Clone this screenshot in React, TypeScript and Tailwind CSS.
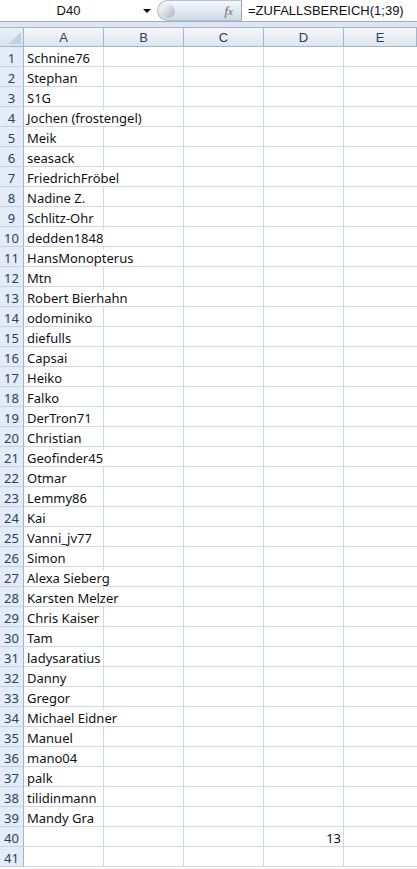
import React from 'react';

const names = [
  'Schnine76', 'Stephan', 'S1G', 'Jochen (frostengel)', 'Meik', 'seasack', 'FriedrichFröbel',
  'Nadine Z.', 'Schlitz-Ohr', 'dedden1848', 'HansMonopterus', 'Mtn', 'Robert Bierhahn',
  'odominiko', 'diefulls', 'Capsai', 'Heiko', 'Falko', 'DerTron71', 'Christian', 'Geofinder45',
  'Otmar', 'Lemmy86', 'Kai', 'Vanni_jv77', 'Simon', 'Alexa Sieberg', 'Karsten Melzer',
  'Chris Kaiser', 'Tam', 'ladysaratius', 'Danny', 'Gregor', 'Michael Eidner', 'Manuel',
  'mano04', 'palk', 'tilidinmann', 'Mandy Gra',
];

const cols = ['A', 'B', 'C', 'D', 'E'];

function FormulaBar() {
  return (
    <div className="flex h-[22px] border-b border-[#a3aebd] bg-white">
      <div className="relative flex w-[157px] items-center justify-center text-[13px] text-[#111]">
        <span className="-ml-[20px]">D40</span>
        <span className="absolute right-[6px] top-[9px] h-0 w-0 border-x-[4px] border-t-[4px] border-x-transparent border-t-[#111]" />
      </div>
      <div className="relative flex w-[85px] items-center justify-end rounded-l-full border border-r-[#9aa8b8] border-[#b4c1d1] bg-gradient-to-b from-[#f4f7fb] via-[#e3e9f2] to-[#cfd9e6] pr-[8px]">
        <span className="absolute left-[3px] top-[3px] h-[14px] w-[14px] rounded-full bg-gradient-to-br from-white to-[#a9b3bf]" />
        <span className="font-['Liberation_Serif'] text-[13px] italic text-[#666]">f<span className="text-[11px]">x</span></span>
      </div>
      <div className="flex flex-1 items-center pl-[6px] text-[13px] text-[#111]">=ZUFALLSBEREICH(1;39)</div>
    </div>
  );
}

export default function App() {
  const rows = Array.from({ length: 41 }, (_, i) => i + 1);
  return (
    <div className="h-[869px] w-[417px] overflow-hidden bg-white font-['Liberation_Sans',sans-serif]">
      <FormulaBar />
      <div className="h-[6px] border-b border-[#9eb6ce] bg-[#dfe6ef]" />
      <div className="grid grid-cols-[24px_80px_80px_80px_80px_1fr]">
        <div className="relative h-[19px] border-b border-r border-[#9eb6ce] bg-gradient-to-b from-[#e9eff7] to-[#d7e2ef]">
          <span className="absolute bottom-[2px] right-[2px] h-0 w-0 border-b-[12px] border-l-[12px] border-b-[#c3d0e0] border-l-transparent" />
        </div>
        {cols.map(c => (
          <div
            key={c}
            className="flex h-[19px] items-center justify-center border-b border-r border-[#9eb6ce] bg-gradient-to-b from-[#f5f7fa] via-[#eaeff5] to-[#dde4ec] pt-[2px] text-[13px] text-[#27415e]"
          >
            {c}
          </div>
        ))}
        {rows.map(r => (
          <React.Fragment key={r}>
            <div className="flex h-[20px] items-center justify-center border-b border-r border-[#9eb6ce] border-b-[#c5d2e2] bg-[#e4ecf7] pt-[3px] font-['Noto_Sans'] text-[13px] leading-[16px] text-[#27415e]">
              {r}
            </div>
            <div className="flex h-[20px] items-center overflow-visible whitespace-nowrap border-b border-r border-[#d0d7e5] pl-[3px] pt-[3px] font-['Noto_Sans'] text-[13px] leading-[16px] text-[#111]">
              <span className="relative z-10 bg-white pr-[1px]">{names[r - 1] ?? ''}</span>
            </div>
            <div className="h-[20px] border-b border-r border-[#d0d7e5]" />
            <div className="h-[20px] border-b border-r border-[#d0d7e5]" />
            <div className="flex h-[20px] items-center justify-end border-b border-r border-[#d0d7e5] pr-[2px] pt-[3px] font-['Noto_Sans'] text-[13px] leading-[16px] text-[#111]">
              {r === 40 ? '13' : ''}
            </div>
            <div className="h-[20px] border-b border-[#d0d7e5]" />
          </React.Fragment>
        ))}
      </div>
    </div>
  );
}
